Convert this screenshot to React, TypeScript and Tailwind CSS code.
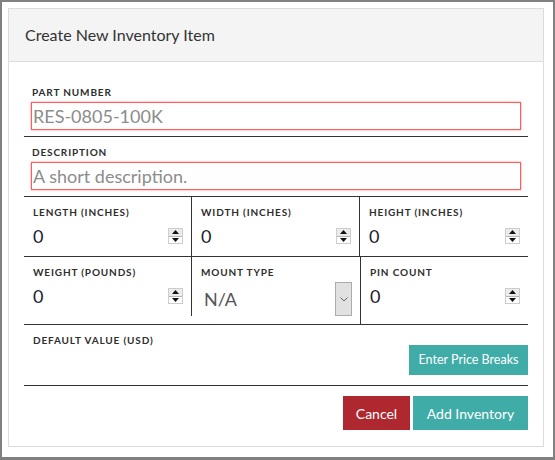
import React from 'react';

const font = { fontFamily: 'Lato, "Open Sans", sans-serif' };

function Label({ children }: { children: React.ReactNode }) {
  return (
    <div className="h-[12px] pl-px text-[10px] leading-[12px] font-bold tracking-[0.085em] text-[#2e2e2e] uppercase whitespace-nowrap">
      {children}
    </div>
  );
}

function Spinner() {
  return (
    <div className="flex h-[16px] w-[15px] flex-col border border-[#cdcdcd] bg-[#ececec]">
      <div className="flex flex-1 items-center justify-center">
        <svg width="7" height="4" viewBox="0 0 7 4">
          <path d="M0 4 L3.5 0 L7 4 Z" fill="#111" />
        </svg>
      </div>
      <div className="flex flex-1 items-center justify-center border-t border-[#b5b5b5] bg-white">
        <svg width="7" height="4" viewBox="0 0 7 4">
          <path d="M0 0 L3.5 4 L7 0 Z" fill="#111" />
        </svg>
      </div>
    </div>
  );
}

function NumberField({ label, value = '0' }: { label: string; value?: string }) {
  return (
    <>
      <Label>{label}</Label>
      <div className="mt-[4px] flex h-[28px] items-center">
        <input
          readOnly
          value={value}
          className="h-full min-w-0 flex-1 bg-transparent pl-px text-[18px] text-[#1c2230] outline-none"
          style={font}
        />
        <Spinner />
      </div>
    </>
  );
}

function TextField({ label, placeholder }: { label: string; placeholder: string }) {
  return (
    <div className="border-b border-[#333] px-[7px] pt-[9px] pb-[6px]">
      <Label>{label}</Label>
      <input
        placeholder={placeholder}
        className="mt-[4px] block h-[28px] w-full border border-[#ff5c5c] bg-white px-px text-[18px] text-[#333] shadow-[0_0_2px_#ff8a8a] outline-none placeholder:text-[#8c8c8c]"
        style={font}
      />
    </div>
  );
}

export default function App() {
  return (
    <div
      className="h-[460px] w-[555px] border-x-2 border-t-2 border-b-[3px] border-[#808080] bg-white pt-[6px] pl-[6px]"
      style={font}
    >
      <div className="flex h-[439px] w-[536px] flex-col border border-[#dcdcdc]">
        <div className="flex h-[53px] items-center border-b border-[#dcdcdc] bg-[#f4f4f4] px-4">
          <h1 className="text-[16px] text-[#333]">Create New Inventory Item</h1>
        </div>

        <div className="px-[15px] pt-[15px]">
          <TextField label="Part Number" placeholder="RES-0805-100K" />
          <TextField label="Description" placeholder="A short description." />

          <div className="grid grid-cols-3 border-b border-[#333]">
            <div className="border-r border-[#333] px-[8px] pt-[9px] pb-[6px]">
              <NumberField label="Length (inches)" />
            </div>
            <div className="border-r border-[#333] px-[8px] pt-[9px] pb-[6px]">
              <NumberField label="Width (inches)" />
            </div>
            <div className="px-[8px] pt-[9px] pb-[6px]">
              <NumberField label="Height (inches)" />
            </div>
          </div>

          <div className="grid grid-cols-3 border-b border-[#333]">
            <div className="self-start border-r border-[#333] px-[8px] pt-[9px] pb-[6px]">
              <NumberField label="Weight (pounds)" />
            </div>
            <div className="px-[8px] pt-[9px] pb-[8px]">
              <Label>Mount Type</Label>
              <div className="mt-[4px] flex h-[34px] items-center">
                <span className="flex-1 pl-[4px] text-[18px] text-[#555]">N/A</span>
                <div className="flex h-full w-[17px] items-center justify-center border border-[#acacac] bg-[#e1e1e1]">
                  <svg width="8" height="5" viewBox="0 0 8 5">
                    <path d="M0.5 0.5 L4 4 L7.5 0.5" fill="none" stroke="#666" strokeWidth="1" />
                  </svg>
                </div>
              </div>
            </div>
            <div className="border-l border-[#333] px-[8px] pt-[9px] pb-[6px]">
              <NumberField label="Pin Count" />
            </div>
          </div>

          <div className="border-b border-[#333] pt-[9px] pb-[10px] pl-[8px]">
            <div className="h-[11px]">
              <Label>Default Value (USD)</Label>
            </div>
            <div className="flex justify-end">
              <button className="h-[30px] w-[119px] bg-[#40aca8] text-[12.5px] text-white">Enter Price Breaks</button>
            </div>
          </div>

          <div className="mt-[10px] flex justify-end gap-[3px]">
            <button className="h-[34px] w-[67px] bg-[#b0282f] text-[14px] text-white">Cancel</button>
            <button className="h-[34px] w-[115px] bg-[#40aca8] text-[14px] text-white">Add Inventory</button>
          </div>
        </div>
      </div>
    </div>
  );
}
